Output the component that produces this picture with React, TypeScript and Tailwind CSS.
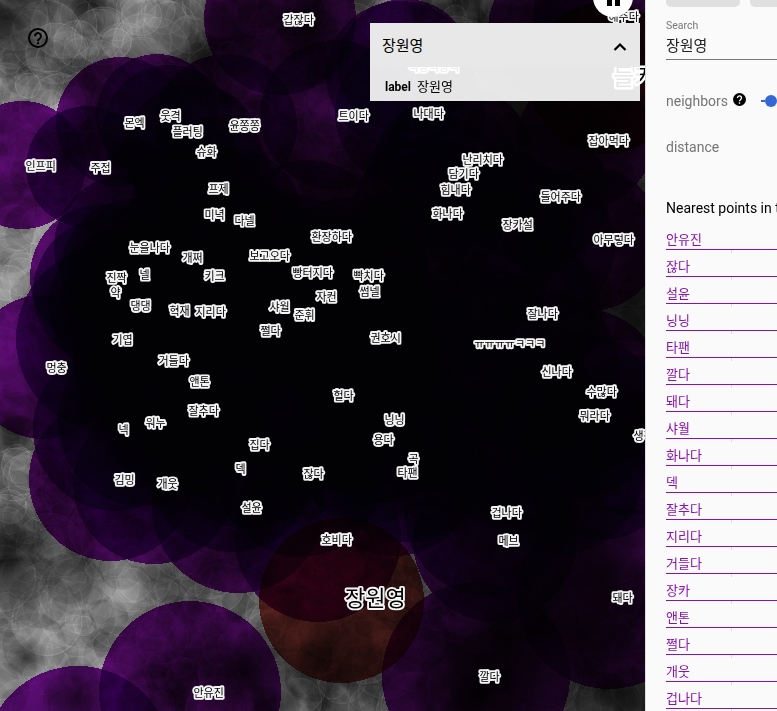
import React from 'react';

type Point = [text: string, left: number, cy: number, radius?: number];

const points: Point[] = [
  ['갑잖다', 283, 19, 76], ['몬엑', 124, 122, 65], ['웃격', 160, 115, 61], ['플러팅', 172, 131, 66],
  ['윤쫑쫑', 229, 125, 71], ['트이다', 338, 115, 75], ['나대다', 413, 113, 75], ['슈화', 196, 151, 68],
  ['인프피', 25, 165, 64], ['주접', 90, 167, 61], ['프제', 208, 188, 70], ['미녁', 204, 214, 72],
  ['다넬', 234, 220, 72], ['난리치다', 462, 159, 74], ['담기다', 448, 173, 74], ['힘내다', 440, 189, 74],
  ['화나다', 432, 213, 76], ['들어주다', 540, 196, 72], ['장카설', 502, 224, 75], ['잡아먹다', 588, 140, 68],
  ['아무렇다', 593, 239, 72], ['환장하다', 311, 236, 76], ['눈을나다', 129, 247, 72], ['개쩌', 182, 257, 74],
  ['보고오다', 249, 255, 76], ['진짝', 106, 277, 73], ['넬', 139, 274, 76], ['키크', 204, 275, 78],
  ['빵터지다', 292, 272, 78], ['빡치다', 353, 275, 78], ['약', 110, 292, 74], ['썸넬', 359, 291, 78],
  ['댕댕', 130, 305, 78], ['혁재', 169, 310, 80], ['지리다', 195, 311, 80], ['샤월', 269, 306, 80],
  ['자컨', 316, 296, 80], ['준휘', 294, 314, 80], ['쩔다', 260, 330, 82], ['권호시', 370, 337, 80],
  ['기엽', 112, 339, 93], ['거들다', 158, 360, 82], ['멍충', 46, 367, 72], ['앤톤', 189, 381, 84],
  ['잘나다', 527, 313, 78], ['ㅠㅠㅠㅠㅋㅋㅋ', 474, 343, 82], ['신나다', 541, 371, 82], ['수많다', 586, 391, 82],
  ['뭐라다', 579, 415, 84], ['생각', 633, 435, 80], ['헐다', 333, 395, 84], ['닝닝', 384, 419, 84],
  ['잘추다', 188, 410, 84], ['워누', 145, 422, 84], ['넥', 118, 429, 82], ['집다', 249, 444, 84],
  ['용다', 373, 439, 84], ['곡', 408, 458, 84], ['타팬', 397, 472, 84], ['잖다', 303, 473, 84],
  ['덱', 235, 468, 84], ['김밍', 114, 479, 82], ['개웃', 157, 483, 81], ['설윤', 241, 507, 86],
  ['호비다', 321, 539, 83], ['겁나다', 491, 512, 84], ['메브', 498, 540, 82], ['돼다', 612, 597, 92],
  ['깔다', 479, 676, 94], ['안유진', 193, 692, 91], ['떡상떡상떡', 408, 66, 67], ['해주다', 608, 16, 72],
];

// Points whose labels are culled but whose influence radius is still painted.
const unlabeled: [number, number, number][] = [
  [78, 760, 94], [560, 30, 72], [400, 75, 74], [480, 420, 84], [520, 450, 84],
  [440, 370, 84], [535, 245, 80], [560, 470, 84], [600, 460, 80],
];

const seeded = (seed: number) => () => {
  seed = (seed * 1664525 + 1013904223) >>> 0;
  return seed / 4294967296;
};
const random = seeded(77);
const blobs = Array.from({ length: 1900 }, () => {
  const x = random() * 645, y = random() * 711, r = 8 + random() * 28;
  return { x, y, r, light: random() > 0.5 };
});

const glows: [number, number, number, number][] = [
  [85, 625, 120, 0.7], [20, 245, 80, 0.8], [160, 18, 65, 0.4], [0, 120, 90, 0.4], [0, 350, 110, 0.5],
  [15, 700, 110, 0.65], [125, 60, 50, 0.4], [235, 600, 45, 0.3], [128, 653, 40, 0.7], [160, 610, 35, 0.4],
  [50, 595, 35, 0.4], [370, 610, 60, 0.2],
];
const shades: [number, number, number, number][] = [
  [5, 18, 55, 0.7], [8, 560, 60, 0.7], [90, 80, 50, 0.3], [340, 645, 80, 0.6], [245, 670, 60, 0.85],
  [540, 630, 150, 0.85], [220, 30, 70, 0.3], [75, 695, 32, 0.5], [300, 40, 120, 0.75], [540, 20, 150, 0.85],
  [25, 658, 24, 0.6], [600, 130, 110, 0.8], [480, 690, 110, 0.9], [600, 580, 100, 0.7], [85, 560, 50, 0.4],
  [170, 575, 55, 0.4], [630, 690, 90, 0.6], [100, 150, 60, 0.5], [190, 80, 70, 0.5], [220, 560, 50, 0.4], [510, 90, 60, 0.7],
];

function MapField() {
  return (
    <svg width="645" height="711" viewBox="0 0 645 711" className="block" style={{ fontFamily: '"Noto Sans CJK KR", sans-serif' }}>
      <defs>
        <filter id="cloud" x="0" y="0" width="100%" height="100%" colorInterpolationFilters="sRGB">
          <feTurbulence type="fractalNoise" baseFrequency="0.026" numOctaves="5" seed="8" />
          <feColorMatrix values="1.4 0 0 0 -0.42  1.4 0 0 0 -0.42  1.4 0 0 0 -0.42  0 0 0 0 1" />
        </filter>
        <filter id="filaments" x="0" y="0" width="100%" height="100%" colorInterpolationFilters="sRGB">
          <feTurbulence type="turbulence" baseFrequency="0.018" numOctaves="4" seed="21" />
          <feColorMatrix values="-3.4 0 0 0 0.9  -3.4 0 0 0 0.9  -3.4 0 0 0 0.9  0 0 0 0 1" />
        </filter>
        <radialGradient id="glow"><stop stopColor="#bbb" /><stop offset="1" stopColor="#aaa" stopOpacity="0" /></radialGradient>
        <radialGradient id="shade"><stop stopColor="#000" /><stop offset="1" stopColor="#000" stopOpacity="0" /></radialGradient>
        <radialGradient id="core"><stop stopColor="#000" /><stop offset="0.72" stopColor="#000" stopOpacity="0.85" /><stop offset="1" stopColor="#000" stopOpacity="0" /></radialGradient>
      </defs>
      <rect width="645" height="711" fill="#505050" />
      <rect width="645" height="711" filter="url(#cloud)" opacity="0.38" />
      {glows.map(([x, y, r, o], i) => <circle key={i} cx={x} cy={y} r={r} fill="url(#glow)" opacity={o} />)}
      <rect width="645" height="711" filter="url(#filaments)" opacity="0.32" className="mix-blend-screen" />
      {blobs.map((b, i) => (
        <circle
          key={i} cx={b.x} cy={b.y} r={b.r}
          fill={b.light ? '#ddd' : '#000'} fillOpacity={b.light ? 0.075 : 0.085}
          stroke="#fff" strokeOpacity={b.light ? 0.12 : 0.04} strokeWidth="1"
        />
      ))}
      {shades.map(([x, y, r, o], i) => <circle key={i} cx={x} cy={y} r={r} fill="url(#shade)" opacity={o} />)}
      <ellipse cx="250" cy="330" rx="235" ry="235" fill="url(#core)" opacity="0.85" />
      <ellipse cx="500" cy="330" rx="220" ry="290" fill="url(#core)" opacity="0.8" />
      <g shapeRendering="crispEdges">
        {points.map(([t, x, y, r = 80]) => (
          <circle key={t} cx={x - 3} cy={y} r={r} fill="#8e12b0" className="mix-blend-multiply" />
        ))}
        {unlabeled.map(([x, y, r], i) => <circle key={i} cx={x} cy={y} r={r} fill="#9014b8" className="mix-blend-multiply" />)}
        <circle cx="605" cy="78" r="76" fill="#701828" className="mix-blend-multiply" />
        <circle cx="341.5" cy="600.5" r="82.5" fill="#a2403a" className="mix-blend-multiply" />
      </g>
      <g fill="#000" stroke="#f4f4f4" strokeWidth="3.8" strokeLinejoin="round" style={{ paintOrder: 'stroke' }} fontSize="11">
        {points.map(([t, x, y]) => <text key={t} x={x + 0.5} y={y + 4.5}>{t}</text>)}
        <text x="345" y="605.5" fontSize="22">장원영</text>
        <text x="613" y="85" fontSize="23" strokeWidth="5" stroke="#fff">들커</text>
      </g>
      <g fill="none" stroke="#000" strokeWidth="2">
        <circle cx="38" cy="38" r="9" />
        <path d="M35 36.2a3 3 0 1 1 4.8 2.3c-1.2.9-1.8 1.4-1.8 2.7" />
        <path d="M38 42.3v2" />
      </g>
    </svg>
  );
}

const nearest = ['안유진', '잖다', '설윤', '닝닝', '타팬', '깔다', '돼다', '샤월', '화나다', '덱', '잘추다', '지리다', '거들다', '장카', '앤톤', '쩔다', '개웃', '겁나다'];

export default function App() {
  return (
    <div className="flex h-[711px] w-[777px] overflow-hidden bg-black font-['Roboto','Noto_Sans_CJK_KR',sans-serif]">
      <main className="relative w-[645px] shrink-0 overflow-hidden">
        <MapField />
        <div className="absolute -top-[23px] left-[593px] flex size-10 items-center justify-center gap-[3px] rounded-full bg-white">
          <span className="mt-1 h-[14px] w-[5px] bg-black" />
          <span className="mt-1 h-[14px] w-[5px] bg-black" />
        </div>
        <section className="absolute left-[370px] top-[23px] w-[270px]">
          <div className="flex h-11 items-center justify-between bg-[#e8e8e8] pl-3 pr-[13px] text-[15px] text-black">
            <span className="pt-[2px]">장원영</span>
            <svg width="14" height="10" viewBox="0 0 14 10" className="mt-1" fill="none" stroke="#000" strokeWidth="2.2"><path d="M1.5 8 7 2.5 12.5 8" /></svg>
          </div>
          <div className="flex h-[34px] items-center gap-[6px] bg-white/90 pl-[15px] pt-[6px] text-xs text-black">
            <b>label</b><span className="text-[13px]">장원영</span>
          </div>
        </section>
      </main>
      <aside className="w-[132px] shrink-0 overflow-hidden border-l border-[#ddd] bg-[#fafafa] pl-5">
        <div className="w-[300px]">
          <div className="flex h-[7px] gap-[10px]">
            <div className="w-[74px] rounded-b-[5px] bg-[#e0e0e0]" />
            <div className="w-[74px] rounded-b-[5px] bg-[#e0e0e0]" />
          </div>
          <div className="h-[53px] border-b border-[#777] pt-3">
            <div className="text-[10.5px] leading-[14px] text-[#777]">Search</div>
            <div className="text-[15px] leading-[26px] text-[#222]">장원영</div>
          </div>
          <div className="flex h-[82px] items-center text-sm text-[#757575]">
            <span className="w-[67px]">neighbors</span>
            <svg width="13" height="13" viewBox="0 0 13 13" className="-mt-[3px]">
              <circle cx="6.5" cy="6.5" r="6.5" fill="#000" />
              <path d="M4.5 5a2 2 0 1 1 3.2 1.5C6.9 7.1 6.5 7.5 6.5 8.3M6.5 9.3v1.5" fill="none" stroke="#fff" strokeWidth="1.4" />
            </svg>
            <span className="ml-[15px] h-[2px] w-1 bg-[#3367d6]" />
            <span className="size-3 rounded-full bg-[#3367d6]" />
          </div>
          <div className="h-[57px] text-sm leading-[10px] text-[#757575]">distance</div>
          <h2 className="h-6 whitespace-nowrap text-sm leading-[18px] text-black">Nearest points in the original space:</h2>
          <ul className="text-[13px] text-[#8a12b0]">
            {nearest.map((word) => (
              <li key={word} className="relative h-[27px] border-b border-[#8a12b0] leading-[33px]">
                {word}
                <span className="absolute -bottom-1 left-[65px] h-[3px] w-px bg-[#ddd]" />
              </li>
            ))}
          </ul>
        </div>
      </aside>
    </div>
  );
}
